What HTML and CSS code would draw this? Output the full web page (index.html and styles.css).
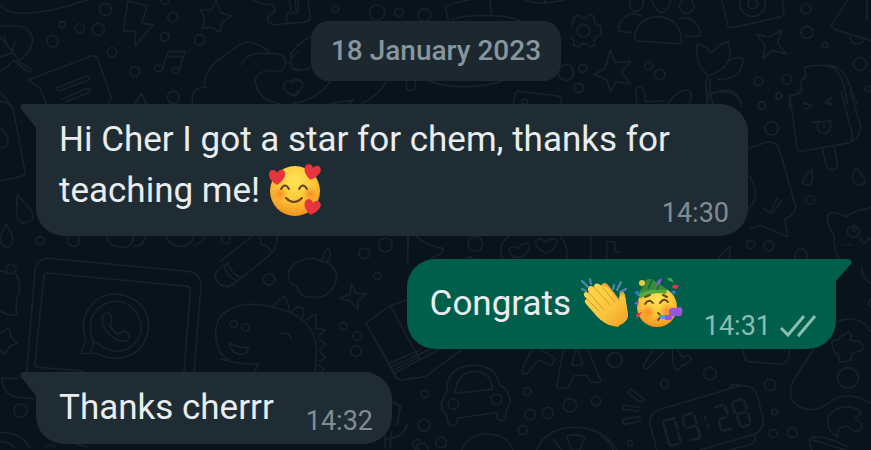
FILE: index.html
```html
<!DOCTYPE html>
<html lang="en">
<head>
  <meta charset="UTF-8" />
  <meta name="viewport" content="width=device-width, initial-scale=1.0"/>
  <title>Chat</title>
  <link rel="stylesheet" href="styles.css">
</head>
<body>
  <svg class="wallpaper" viewBox="0 0 871 450" preserveAspectRatio="xMinYMin slice" aria-hidden="true">
    <!-- top left: leaf, note, bolt, music, star, hand -->
    <svg x="0" y="0" width="300" height="110" viewBox="0 0 900 330">
      <path d="M0 15Q20 42 80 40Q160 35 260 0M0 78H50Q95 80 98 120Q90 170 50 180L92 208Q92 218 82 215L40 180Q15 210 0 212M0 110L50 170M12 108L20 132M45 125L38 152M0 170L38 158M0 275L40 325"/>
      <path d="M85 240L275 167Q288 165 293 176L333 290Q334 300 325 310M85 240L120 265L138 310M170 264L262 227Q273 232 266 240L178 272Q166 272 170 264ZM186 298L262 265Q274 270 266 278L196 306"/>
      <path d="M384 3L441 18L425 70L459 74L405 138L407 94L370 92ZM648 2L662 38L693 48L667 66L660 97L633 82L607 85L615 58L602 30L634 30Z"/>
      <path d="M488 202L505 155H555L538 208M502 170H550"/><ellipse cx="476" cy="205" rx="13" ry="9"/><ellipse cx="526" cy="211" rx="11" ry="9"/>
      <path d="M405 310L425 280L438 310M578 310Q570 265 608 262H620M612 262Q615 200 670 170Q725 125 745 126Q780 130 808 158M722 194Q745 160 775 160H825Q858 165 857 190Q855 215 830 213Q775 205 765 240Q775 305 840 310M900 155Q870 165 870 190Q875 208 900 208M850 255Q855 240 878 245Q890 238 900 242M850 255Q850 275 885 288L900 275"/>
      <path d="M762 0Q780 15 820 14L825 35Q800 45 803 60Q808 76 830 74L900 66M868 0L872 30Q855 45 862 65M885 0L888 28"/>
      <circle cx="316" cy="28" r="18"/><circle cx="186" cy="74" r="9"/><circle cx="239" cy="85" r="14"/><circle cx="295" cy="88" r="18"/><circle cx="158" cy="124" r="17"/><circle cx="336" cy="157" r="14"/><circle cx="404" cy="215" r="15"/><circle cx="518" cy="51" r="15"/><circle cx="494" cy="110" r="13"/><circle cx="599" cy="120" r="16"/><circle cx="520" cy="292" r="18"/><circle cx="494" cy="2" r="11"/>
    </svg>
    <!-- top middle -->
    <svg x="290" y="0" width="300" height="110" viewBox="0 0 900 330">
      <path d="M0 72L52 65Q62 62 60 50L54 0M0 42L25 35V0M0 170Q8 140 60 110M5 190Q0 210 25 212L60 205M0 245Q25 230 38 250Q40 275 5 285L0 280M10 310Q80 300 120 245M290 245Q260 290 215 310M120 310L190 300L178 310"/>
      <path d="M475 60L465 20Q500 5 540 0M600 0L605 44M485 58Q520 45 590 47Q650 45 690 62M420 245Q520 275 635 245M350 245Q345 270 362 273Q380 270 376 245M705 0Q750 18 820 0M765 0V10M670 310L676 280Q680 272 692 274L805 288Q815 290 814 310"/>
      <circle cx="136" cy="28" r="10"/><circle cx="261" cy="38" r="23"/><circle cx="327" cy="37" r="13"/><circle cx="403" cy="45" r="19"/><circle cx="828" cy="218" r="23"/><circle cx="879" cy="206" r="12"/><circle cx="866" cy="264" r="14"/><circle cx="704" cy="305" r="8"/>
    </svg>
    <!-- top right: gear, people, tulip, stars, ice cream -->
    <svg x="571" y="0" width="300" height="110" viewBox="0 0 900 330">
      <path d="M24 45L34 54H45L56 42L70 50L69 64L78 75L90 79V105L76 109L69 119L72 134L58 141L47 131H33L23 142L7 134L9 120L0 110L-13 106V80L1 75L8 65L6 51Z"/><circle cx="38" cy="92" r="19"/>
      <path d="M190 118Q195 52 262 50Q330 55 332 128L322 131L198 123ZM180 98L143 94Q140 60 175 42Q195 38 212 48M325 57Q350 48 370 65Q390 85 387 108L344 110M176 0Q172 30 195 35Q220 28 216 0M242 0Q255 38 275 38Q298 20 300 0"/><circle cx="347" cy="18" r="22"/>
      <path d="M452 0L470 75Q474 84 485 83L630 50Q642 44 638 30L634 0"/><circle cx="545" cy="11" r="38"/><circle cx="545" cy="11" r="15"/>
      <path d="M118 150L132 187L180 184L152 215L177 252L137 245L118 275L107 240L70 223L102 205ZM557 104L595 111L631 90L620 128L645 162L604 151L577 176L583 136Z"/>
      <path d="M412 226Q370 190 379 133Q405 133 420 160Q440 135 472 125Q495 205 412 226ZM478 180Q490 170 516 175Q515 240 440 238M408 310L404 250L412 228M425 310L415 260L419 235M430 280Q490 250 512 310"/>
      <path d="M830 0L780 78L790 88L900 122M835 108Q842 134 860 132Q875 130 877 118M887 0V60"/>
      <path d="M700 202Q755 188 790 205Q815 225 830 310M765 197Q800 190 825 230L858 310M700 202Q706 220 703 235Q688 235 690 252Q695 270 685 282Q665 280 655 296V325M765 303L782 292M765 303L780 312M698 310L720 315"/>
      <path d="M197 310L195 265Q215 250 222 290V305L275 303M292 310Q315 270 350 270Q370 280 355 310"/>
      <circle cx="0" cy="218" r="9"/><circle cx="35" cy="205" r="12"/><circle cx="23" cy="264" r="14"/><circle cx="233" cy="198" r="12"/><circle cx="266" cy="223" r="16"/><circle cx="705" cy="27" r="15"/><circle cx="708" cy="97" r="18"/><circle cx="762" cy="135" r="8"/><circle cx="867" cy="192" r="20"/><circle cx="562" cy="244" r="13"/><circle cx="648" cy="239" r="14"/><circle cx="624" cy="288" r="9"/><circle cx="573" cy="317" r="11"/><circle cx="892" cy="267" r="9"/>
    </svg>
    <!-- left edge -->
    <svg x="0" y="100" width="350" height="150" viewBox="0 0 1050 450">
      <path d="M0 5Q35 5 42 40L75 215Q76 228 60 230L0 243M0 82Q25 105 25 125Q22 145 0 142M52 285Q45 355 60 365Q78 375 98 357Q105 335 52 285ZM18 373Q-5 410 3 430Q15 445 30 438Q50 420 18 373ZM320 410Q325 440 370 442Q400 440 400 408M400 440Q435 438 435 408M498 410Q510 440 545 440Q575 435 580 408M585 435Q610 430 612 408"/>
      <circle cx="120" cy="422" r="12"/><circle cx="220" cy="421" r="18"/><circle cx="677" cy="418" r="13"/>
    </svg>
    <!-- laptop -->
    <svg x="0" y="235" width="230" height="215" viewBox="0 0 690 645">
      <path d="M80 410L105 105Q110 70 150 70L570 110Q605 118 603 155L582 410M105 385L132 120Q133 114 142 114L562 154Q572 156 571 166L552 410M105 385Q104 396 118 397L250 408M242 356L258 312Q240 270 260 232Q290 175 350 177Q445 190 446 275Q435 365 350 370Q315 370 290 354ZM272 348L280 322L298 328Q340 360 380 342Q425 320 424 270Q410 205 350 198Q290 205 273 255Q267 290 279 318"/>
      <path d="M310 240Q325 225 335 248Q338 262 328 270Q340 292 356 298Q368 283 382 292Q395 305 380 317Q350 325 322 290Q300 262 310 240Z"/>
      <path d="M0 105Q20 112 22 118M45 115Q65 140 56 175Q42 210 52 238Q30 245 0 228M28 278L32 305L52 325L28 335L14 360L0 345M28 278L0 295M5 430Q10 485 60 487L100 490M5 430L55 430M0 592Q60 590 92 640M0 620Q25 618 45 640M135 640Q150 620 165 635M230 628L260 635"/>
      <circle cx="33" cy="102" r="15"/><circle cx="62" cy="527" r="20"/>
      <path d="M690 80Q645 105 645 125Q655 155 690 157M690 225Q645 240 647 300Q650 360 690 375"/>
    </svg>
    <!-- crayon, apple, dinosaur -->
    <svg x="220" y="235" width="200" height="215" viewBox="0 0 600 645">
      <path d="M0 80L95 5M0 150Q20 160 40 148L155 55Q172 35 172 5M120 5L125 30Q145 28 155 55M12 90Q20 125 52 138M22 80Q32 115 63 128"/>
      <path d="M310 82Q285 65 258 72Q210 82 205 120Q205 145 230 155Q240 190 280 187Q320 190 342 155Q358 125 340 98Q325 80 310 82Q302 60 325 38Q340 60 318 82M360 190L390 178L394 145L408 175L441 177L414 196V222L392 199Z"/>
      <path d="M0 245Q30 210 95 208Q170 210 235 245Q290 285 290 350L285 410M0 370Q50 390 115 386L105 410M158 215L192 183Q205 195 207 227M215 230Q235 205 252 225L248 248M258 255L285 238Q292 245 286 275M288 280L315 285L297 302M298 312L318 327L300 342M300 350L316 368L296 380M293 388L313 402L305 410M28 325Q60 340 86 338Q80 362 55 357Q30 350 28 325ZM183 295Q205 290 215 312"/>
      <path d="M438 263L510 212L560 195M438 263L525 425Q530 435 545 435L600 428M510 212L600 375M508 385L600 345M520 405L600 365M563 5V90M520 505L540 512L532 570M560 570Q550 605 505 610M495 600V640M515 590L510 640"/>
      <circle cx="41" cy="267" r="11"/><circle cx="76" cy="277" r="11"/><circle cx="147" cy="133" r="17"/><circle cx="433" cy="55" r="16"/><circle cx="496" cy="30" r="21"/><circle cx="472" cy="123" r="11"/><circle cx="370" cy="273" r="11"/><circle cx="412" cy="303" r="13"/><circle cx="408" cy="348" r="16"/><circle cx="592" cy="628" r="14"/>
    </svg>
    <!-- between the first two bubbles -->
    <svg x="400" y="230" width="220" height="130" viewBox="0 0 660 390">
      <path d="M25 20L22 100M50 20Q80 50 130 55Q132 68 95 85M308 85Q290 50 325 20M480 20Q505 45 500 85M365 82Q330 85 328 60Q335 42 355 55Q365 35 385 42Q395 60 365 82ZM440 70Q400 55 408 32Q425 20 437 38Q455 18 470 32Q475 52 440 70ZM572 20V85M620 85V35H645V65H660"/>
      <circle cx="226" cy="42" r="22"/><path d="M200 85Q210 76 218 85"/>
    </svg>
    <!-- right edge: ice cream, note, cat -->
    <svg x="690" y="90" width="181" height="180" viewBox="0 0 543 540">
      <path d="M300 15L320 172Q325 185 340 183L470 160Q510 150 512 110L480 0M452 0L485 125Q490 145 482 152M300 15Q320 20 328 0M342 38L367 48L345 58M425 25L405 37L425 45M367 97L424 93M384 98Q378 130 405 130Q425 125 420 95M402 98V112M397 176L408 225Q415 242 430 240Q445 235 442 220L432 170M365 240Q335 265 338 278Q345 288 362 282Q370 270 365 240ZM496 232Q480 275 497 283Q520 288 525 275Q520 255 496 232Z"/>
      <path d="M175 175L235 155Q260 155 270 185L317 350Q318 370 285 388L293 440L212 405L180 415M222 355L240 370L262 325M248 370L276 330M175 255Q195 280 197 310Q195 340 175 355"/>
      <path d="M543 353Q500 360 468 380Q440 365 420 368Q405 385 418 412L432 435Q430 465 445 505M455 465L460 466M475 464L480 465M512 440Q510 460 525 460Q535 455 531 445Q540 450 543 445M85 505L120 468L118 505M315 505Q315 475 335 475Q355 485 350 505M50 0Q60 15 55 30M65 10Q140 -10 155 50M0 5V35"/>
      <circle cx="490" cy="424" r="18"/><circle cx="493" cy="418" r="6"/><circle cx="215" cy="46" r="11"/><circle cx="266" cy="18" r="9"/><circle cx="245" cy="115" r="20"/><circle cx="360" cy="330" r="13"/><circle cx="182" cy="464" r="12"/><circle cx="237" cy="467" r="15"/>
    </svg>
    <svg x="690" y="240" width="181" height="120" viewBox="0 0 543 360">
      <path d="M515 82Q515 115 543 130M440 245Q470 232 500 240Q530 250 543 275"/>
      <circle cx="550" cy="190" r="14"/>
    </svg>
    <!-- car and letters -->
    <svg x="380" y="330" width="240" height="120" viewBox="0 0 720 360">
      <path d="M200 185Q200 115 265 107Q345 100 360 165Q395 185 388 225Q375 240 378 265Q365 280 352 265L350 248L232 264V280Q220 295 205 280L200 255Q175 235 190 205ZM225 190L338 178Q335 125 280 124Q230 130 225 190Z"/><circle cx="220" cy="222" r="16"/><circle cx="349" cy="208" r="16"/>
      <path d="M0 50L48 140Q52 150 65 150L135 140L245 60M35 110L150 58M45 128L180 58M455 60L425 120Q425 135 440 132L475 90L515 107L525 85L485 60M550 60L530 170Q535 178 565 172L580 138L620 135L630 155L660 158Q665 150 660 145L625 60M588 60L575 105Q600 110 608 102L595 60M245 360Q265 310 325 312Q385 315 400 360M470 360Q500 290 590 292Q675 295 710 360M560 318Q590 310 615 320L600 360H575L560 318ZM520 330L545 360M40 215L62 230L50 285M82 285Q70 325 15 328M105 360Q115 330 140 345L145 360"/>
      <circle cx="134" cy="192" r="11"/><circle cx="132" cy="286" r="18"/><circle cx="183" cy="338" r="16"/><circle cx="441" cy="185" r="12"/><circle cx="450" cy="254" r="16"/><circle cx="503" cy="249" r="17"/><circle cx="428" cy="300" r="13"/><circle cx="570" cy="226" r="20"/><circle cx="648" cy="213" r="14"/>
    </svg>
    <!-- clock and game controller -->
    <svg x="600" y="330" width="271" height="120" viewBox="0 0 813 360">
      <path d="M170 360L150 280Q150 250 175 240L420 167Q460 165 470 190L490 270Q490 300 465 312L300 360M388 175Q390 160 415 163M440 320L465 315Q468 335 455 342L390 360"/>
      <path class="digits" d="M192 272L222 265M190 280L198 307M226 275L233 300M200 315L207 342M235 310L242 335M213 347L235 342M250 257L275 250M248 265L253 287M282 257L290 280M260 294L284 288M292 292L300 320M275 330L298 325M315 260L317 266M323 285L325 291M345 232L368 225M375 230L383 252M358 268L378 262M357 277L364 300M370 302L394 296M400 215L426 208M397 222L405 247M433 214L440 236M412 252L436 246M412 260L420 285M445 252L451 275M427 290L448 284"/>
      <path d="M695 40Q700 25 715 30L720 20L745 5Q758 10 750 30L780 35Q795 55 785 62L758 68L750 90Q730 100 720 95L712 70Q700 70 695 40ZM640 60L578 155Q560 200 590 225Q635 255 685 220Q735 175 813 220M430 60Q430 90 445 95L545 103Q570 95 568 60M218 60Q215 110 230 122Q240 120 242 108Q270 100 275 85Q265 70 248 82L232 60M160 60L130 105Q130 120 145 115L192 65"/>
      <path d="M95 178L132 208Q125 220 115 212L85 190Q85 178 95 178ZM70 225L118 232Q122 242 112 243L68 238ZM68 268L118 260Q125 272 115 275L70 283Z"/>
      <path d="M712 320Q675 300 685 260Q705 230 745 230Q780 235 782 250Q770 260 765 265L785 280Q790 305 765 305L745 290Q710 285 712 320ZM635 360Q620 325 640 320Q690 320 740 350M640 330L735 360M0 318Q30 330 40 360"/>
      <circle cx="744" cy="144" r="31"/><circle cx="44" cy="90" r="22"/><circle cx="194" cy="162" r="12"/><circle cx="330" cy="131" r="19"/><circle cx="510" cy="165" r="17"/><circle cx="524" cy="246" r="9"/><circle cx="520" cy="311" r="12"/><circle cx="577" cy="308" r="15"/><circle cx="90" cy="340" r="8"/>
    </svg>
  </svg>

  <main class="chat">
    <time class="date" datetime="2023-01-18">18 January 2023</time>

    <article class="bubble incoming long">
      <svg class="tail" viewBox="0 0 17 26" aria-hidden="true"><path d="M17 0H3Q-1 1 1 5L17 25Z"/></svg>
      <p class="text with-emoji">Hi Cher I got a star for chem, thanks for teaching me! <svg class="emoji" viewBox="0 0 52 52" role="img" aria-label="smiling face with hearts">
        <defs>
          <radialGradient id="face" cx=".5" cy=".3" r=".75"><stop offset="0" stop-color="#ffe45a"/><stop offset=".5" stop-color="#fdc836"/><stop offset="1" stop-color="#f08a1d"/></radialGradient>
          <radialGradient id="cheek"><stop offset="0" stop-color="#f57b28" stop-opacity=".8"/><stop offset="1" stop-color="#f78b20" stop-opacity="0"/></radialGradient>
          <path id="heart" d="M0 8Q-8 3-8-2Q-8-7-4-7Q-1-7 0-4Q2-8 6-7Q10-4 7 1Q5 5 0 8Z"/>
        </defs>
        <circle cx="26" cy="27" r="25" fill="url(#face)"/>
        <circle cx="11" cy="30" r="8" fill="url(#cheek)"/><circle cx="41" cy="30" r="8" fill="url(#cheek)"/>
        <path d="M12 25Q16 18 20 25M30 25Q34 18 38 25M17 34Q25 42 33 34" fill="none" stroke="#65431b" stroke-width="2" stroke-linecap="round"/>
        <use href="#heart" x="8" y="13" fill="#e8343f"/>
        <use href="#heart" fill="#e8343f" transform="translate(43 8) rotate(12)"/>
        <use href="#heart" fill="#e8343f" transform="translate(43 43) rotate(12)"/>
      </svg></p>
      <time class="time">14:30</time>
    </article>

    <article class="bubble outgoing">
      <svg class="tail" viewBox="0 0 17 26" aria-hidden="true"><path d="M0 0H13Q18 1 16 5L0 23Z"/></svg>
      <p class="text with-emoji">Congrats <svg class="emoji" viewBox="0 0 52 52" role="img" aria-label="clapping hands">
        <defs><linearGradient id="skin" x1="0" y1="0" x2="1" y2="1"><stop offset="0" stop-color="#ffd94e"/><stop offset=".6" stop-color="#fbc43c"/><stop offset="1" stop-color="#ee9c25"/></linearGradient></defs>
        <path d="M20 10Q24 3 28 8L39 22L40 15Q44 13 45 18L48 37Q49 44 40 48L30 44Z" fill="#f2aa32"/>
        <path d="M5 20Q2 16 6 15L9 16Q6 9 11 9L14 10Q14 5 19 7L23 10Q26 8 29 12L39 25Q39 17 43 18Q46 20 46 27L48 39L38 50L29 48Q20 44 14 36L6 27Q3 23 7 22Z" fill="url(#skin)"/>
        <path d="M9 16L24 33M14 10L30 28M23 11L35 25M7 22L19 34" fill="none" stroke="#dc9830" stroke-width="1" stroke-linecap="round"/>
        <path d="M2 12L6 14M2 4L8 10M10 2L11 7M34 8L33 12M41 5L37 13M46 12L40 15" fill="none" stroke="#5589b4" stroke-width="2" stroke-linecap="round"/>
      </svg><svg class="emoji" viewBox="0 0 52 52" role="img" aria-label="partying face">
        <circle cx="25" cy="30" r="20" fill="url(#face)"/>
        <circle cx="16" cy="35" r="8" fill="url(#cheek)"/><circle cx="35" cy="34" r="8" fill="url(#cheek)"/>
        <path d="M6 18L13 4Q17 0 21 3L35 12Q34 17 25 16Q14 17 9 21Z" fill="#398a3c"/>
        <path d="M6 18Q17 11 35 13L34 17Q19 14 9 21Z" fill="#55aa3f"/>
        <path d="M13 5L9 12M20 3L16 12M27 8L25 13" stroke="#216b35" stroke-width="2"/>
        <path d="M13 27Q17 21 21 26M28 26Q32 20 36 25M13 20L18 18M31 18L35 20M26 36Q31 39 26 43" fill="none" stroke="#65431b" stroke-width="2" stroke-linecap="round"/>
        <path d="M27 38H38V42H28Z" fill="#4e9ed2"/><path d="M37 33Q38 30 43 31L49 30Q52 34 49 39H41L39 43H33V38H37Z" fill="#9a55dd"/>
        <path d="M2 15L7 14L6 19ZM39 14L44 14L42 18Z" fill="#347ce0"/>
        <path d="M4 37L10 35L5 42ZM41 8H47L45 12L40 11Z" fill="#df3544"/>
        <path d="M26 3L30 1L28 7L24 9ZM2 26L7 24L6 29Z" fill="#8b58d3"/>
        <path d="M35 1Q41 0 41 5L37 4Z" fill="#35aa48"/><circle cx="10" cy="6" r="3" fill="#e4cc3e"/>
      </svg></p>
      <div class="meta">
        <time class="time">14:31</time>
        <svg class="checks" viewBox="0 0 38 24" role="img" aria-label="Delivered"><path d="M2 14L9 21L25 2M19 20L20 21L36 2"/></svg>
      </div>
    </article>

    <article class="bubble incoming short">
      <svg class="tail" viewBox="0 0 17 26" aria-hidden="true"><path d="M17 0H3Q-1 1 1 5L17 25Z"/></svg>
      <p class="text">Thanks cherrr</p>
      <time class="time">14:32</time>
    </article>
  </main>
</body>
</html>
```
FILE: styles.css
```css
* { box-sizing: border-box; }
body { margin: 0; min-height: 100vh; position: relative; overflow: hidden; background: #08131a; font-family: Roboto, sans-serif; }

.wallpaper { position: absolute; top: 0; left: 0; width: 100%; height: 100%; fill: none; stroke: #162228; stroke-width: 5; stroke-linecap: round; stroke-linejoin: round; }
.digits { stroke-width: 8; }

.chat { position: relative; display: flex; flex-direction: column; gap: 23px; padding: 21px 35px 6px 36px; }

.date { align-self: center; padding: 14px 20px; border-radius: 18px; background: #1d282e; color: #8696a0; font-size: 28px; font-weight: 500; line-height: 32px; }

.bubble { position: relative; display: flex; align-items: flex-end; max-width: 89%; border-radius: 28px; color: #e9edef; }
.incoming { align-self: flex-start; padding: 10px 19px 7px 23px; border-top-left-radius: 0; background: #202c33; }
.outgoing { align-self: flex-end; gap: 20px; padding: 19px 19px 7px 23px; border-top-right-radius: 0; background: #005f4b; }
.long { flex-direction: column; align-items: stretch; }
.long .time { align-self: flex-end; margin-top: -32px; }
.short { gap: 32px; }

.tail { position: absolute; top: 0; width: 17px; height: 26px; }
.incoming .tail { left: -16px; fill: #202c33; }
.outgoing .tail { right: -16px; fill: #005f4b; }

.text { margin: 0 0 4px; font-size: 35px; line-height: 51px; }
.with-emoji { margin-bottom: 13px; }
.emoji { width: 52px; height: 52px; margin: -12px 0; vertical-align: -2px; }

.meta { display: flex; align-items: center; gap: 8px; }
.time { color: #7f8c94; font-size: 27px; line-height: 32px; }
.outgoing .time { color: #8abdb0; }
.checks { width: 38px; height: 24px; fill: none; stroke: #8abdb0; stroke-width: 3; }
```
